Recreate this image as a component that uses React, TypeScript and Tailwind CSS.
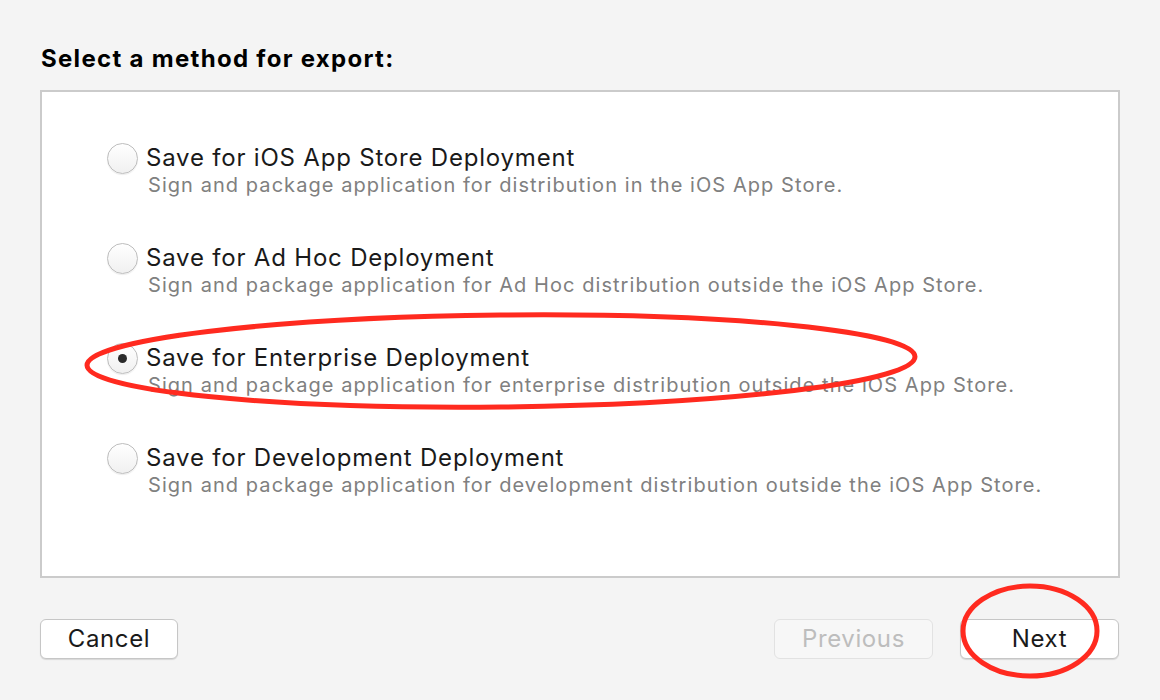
import React from "react";

const OPTIONS = [
  {
    title: "Save for iOS App Store Deployment",
    description: "Sign and package application for distribution in the iOS App Store.",
  },
  {
    title: "Save for Ad Hoc Deployment",
    description: "Sign and package application for Ad Hoc distribution outside the iOS App Store.",
  },
  {
    title: "Save for Enterprise Deployment",
    description: "Sign and package application for enterprise distribution outside the iOS App Store.",
  },
  {
    title: "Save for Development Deployment",
    description: "Sign and package application for development distribution outside the iOS App Store.",
  },
];

function Radio({ checked }: { checked: boolean }) {
  return (
    <span className="flex h-[31px] w-[31px] shrink-0 items-center justify-center rounded-full border border-[#bdbdbd] bg-gradient-to-b from-white to-[#f0f0f0] shadow-[0_1px_1px_rgba(0,0,0,0.08)]">
      {checked && <span className="h-[9px] w-[9px] rounded-full bg-[#2a2a2a]" />}
    </span>
  );
}

function Button({ label, disabled }: { label: string; disabled?: boolean }) {
  return (
    <button
      className={
        "flex h-[40px] w-full items-center justify-center rounded-[6px] border text-[24px] tracking-[0.6px] " +
        (disabled
          ? "border-[#e2e2e2] bg-[#f7f7f7] text-[#bdbdbd]"
          : "border-[#c6c6c6] bg-white text-[#1a1a1a] shadow-[0_1px_1px_rgba(0,0,0,0.12)]")
      }
    >
      {label}
    </button>
  );
}

export default function App() {
  const selected = 2;
  return (
    <div
      className="relative h-[700px] w-[1160px] bg-[#f4f4f4] px-[40px] pt-[44px]"
      style={{ fontFamily: 'Inter, "Liberation Sans", Arial, sans-serif' }}
    >
      <h1 className="pl-[1px] text-[24px] font-bold leading-[30px] tracking-[1.3px] text-black">
        Select a method for export:
      </h1>

      <div className="mt-[16px] h-[488px] w-[1080px] border-2 border-[#cbcbcb] bg-white pl-[65px] pt-[51px]">
        <ul className="flex flex-col gap-[45px]">
          {OPTIONS.map((o, i) => (
            <li key={o.title} className="flex items-start gap-[8px]">
              <Radio checked={i === selected} />
              <div className="flex flex-col">
                <span className="text-[24px] leading-[30px] tracking-[0.8px] text-[#1a1a1a]">
                  {o.title}
                </span>
                <span className="pl-[2px] text-[20px] leading-[25px] tracking-[1.06px] text-[#808080]">
                  {o.description}
                </span>
              </div>
            </li>
          ))}
        </ul>
      </div>

      <div className="mt-[41px] flex items-center">
        <div className="w-[138px]">
          <Button label="Cancel" />
        </div>
        <div className="ml-auto flex gap-[27px] pr-[1px]">
          <div className="w-[159px]">
            <Button label="Previous" disabled />
          </div>
          <div className="w-[159px]">
            <Button label="Next" />
          </div>
        </div>
      </div>

      {/* red annotation marks */}
      <svg className="pointer-events-none absolute left-0 top-0" width="1160" height="700">
        <ellipse cx="501" cy="361" rx="414" ry="46" fill="none" stroke="#ff2a1f" strokeWidth="5" transform="rotate(-0.6 501 361)" />
        <ellipse cx="1030" cy="631" rx="67" ry="45" fill="none" stroke="#ff2a1f" strokeWidth="5" />
      </svg>
    </div>
  );
}
